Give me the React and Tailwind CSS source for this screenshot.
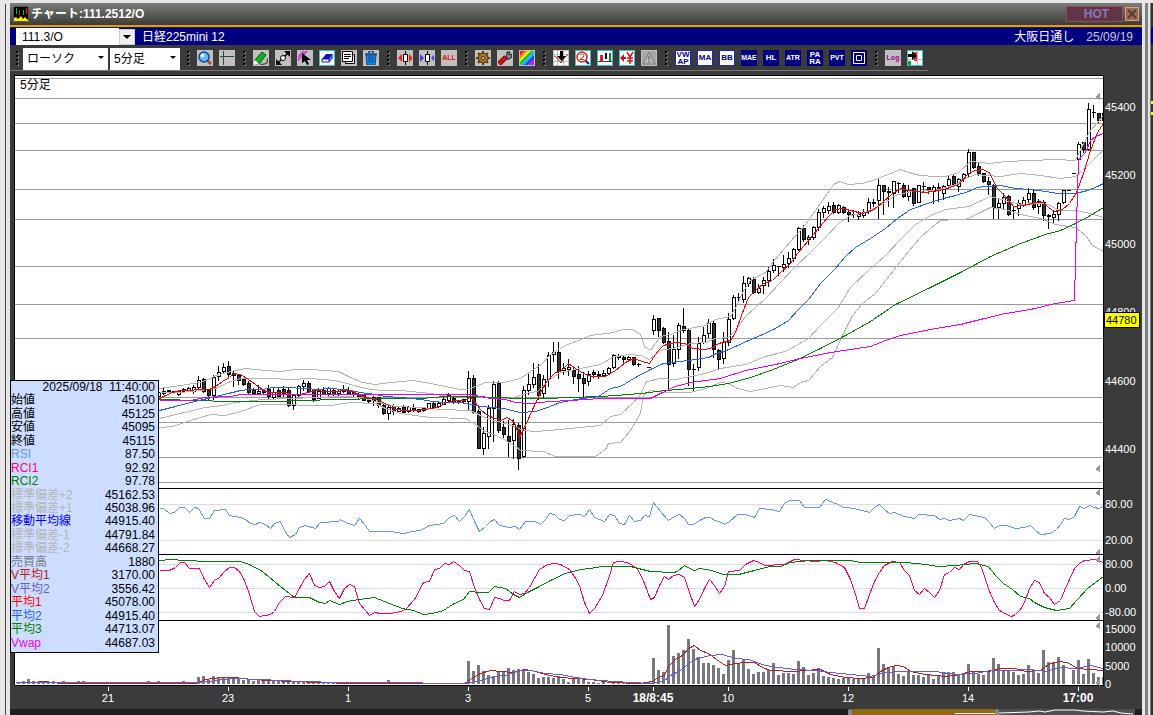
import React, { useState } from 'react';

const FIRST_X = 158;
const STEP = 5;

// high, body top, body bottom, low, filled
const candles = [
  [391, 392, 396, 396, 0], [388, 391, 393, 394, 0], [390, 390, 391, 391, 1], [391, 391, 392, 392, 1],
  [390, 391, 394, 395, 0], [388, 389, 391, 392, 0], [387, 388, 391, 391, 0], [385, 387, 391, 393, 0],
  [376, 380, 387, 388, 0], [378, 379, 391, 392, 1], [389, 390, 395, 399, 1], [375, 377, 395, 399, 0],
  [366, 372, 376, 380, 0], [363, 367, 371, 372, 0], [361, 366, 374, 376, 1], [371, 373, 375, 386, 1],
  [374, 375, 380, 384, 1], [378, 379, 384, 385, 1], [381, 383, 392, 394, 1], [388, 390, 393, 394, 1],
  [385, 391, 393, 393, 0], [389, 390, 392, 393, 1], [385, 389, 396, 398, 1], [387, 392, 397, 398, 0],
  [388, 390, 396, 396, 1], [386, 389, 393, 396, 1], [388, 390, 405, 406, 1], [394, 395, 405, 409, 0],
  [385, 386, 395, 396, 0], [380, 383, 386, 390, 0], [381, 383, 391, 392, 1], [390, 390, 399, 401, 1],
  [388, 391, 398, 398, 0], [387, 390, 394, 394, 1], [387, 388, 393, 396, 0], [389, 390, 394, 395, 1],
  [389, 391, 393, 396, 0], [385, 389, 391, 392, 0], [387, 390, 393, 393, 1], [391, 392, 394, 396, 1],
  [393, 394, 396, 398, 1], [395, 395, 400, 400, 1], [399, 400, 401, 402, 0], [396, 397, 400, 405, 0],
  [397, 397, 405, 407, 1], [404, 405, 413, 414, 1], [404, 407, 413, 419, 0], [404, 406, 411, 414, 1],
  [407, 408, 411, 411, 0], [405, 407, 412, 413, 1], [406, 407, 411, 412, 0], [404, 408, 410, 411, 1],
  [409, 409, 411, 412, 1], [407, 408, 410, 411, 0], [403, 403, 408, 408, 0], [401, 403, 407, 408, 1],
  [401, 403, 406, 407, 0], [396, 399, 404, 404, 0], [393, 395, 400, 402, 0], [396, 398, 402, 403, 1],
  [400, 401, 402, 403, 0], [399, 399, 401, 402, 1], [371, 378, 401, 409, 0], [375, 378, 412, 413, 1],
  [409, 411, 448, 448, 1], [427, 433, 448, 454, 0], [405, 408, 436, 448, 0], [381, 384, 408, 441, 0],
  [381, 383, 430, 432, 1], [421, 427, 434, 437, 1], [420, 436, 441, 456, 1], [419, 424, 440, 458, 0],
  [423, 425, 458, 469, 1], [386, 390, 456, 457, 0], [372, 384, 390, 394, 0], [363, 377, 384, 387, 0],
  [364, 374, 395, 399, 1], [375, 379, 393, 397, 0], [352, 355, 379, 386, 0], [342, 352, 354, 361, 0],
  [342, 352, 371, 378, 1], [363, 368, 370, 374, 0], [359, 367, 369, 375, 0], [368, 370, 376, 383, 1],
  [366, 374, 378, 391, 1], [372, 378, 383, 398, 1], [371, 374, 381, 385, 0], [370, 372, 374, 377, 1],
  [371, 374, 375, 378, 1], [370, 373, 375, 375, 0], [367, 368, 373, 374, 0], [354, 355, 367, 368, 0],
  [354, 356, 357, 359, 0], [356, 357, 359, 362, 1], [356, 357, 359, 361, 0], [357, 357, 364, 365, 1],
  [363, 364, 364, 366, 1], null, [367, 367, 367, 367, 1], [315, 319, 330, 334, 0],
  [318, 318, 330, 336, 1], [327, 328, 342, 343, 1], [332, 341, 364, 388, 1], [335, 349, 363, 366, 0],
  [323, 325, 349, 358, 0], [308, 326, 330, 332, 1], [329, 330, 369, 385, 1], [364, 369, 369, 390, 1],
  [337, 343, 367, 370, 0], [327, 335, 342, 343, 0], [319, 323, 333, 337, 0], [320, 323, 349, 357, 1],
  [349, 350, 359, 369, 1], [332, 342, 358, 363, 0], [313, 319, 342, 345, 0], [295, 297, 318, 319, 0],
  [293, 297, 297, 302, 1], [276, 283, 299, 302, 0], [277, 278, 283, 286, 0], [277, 279, 292, 293, 1],
  [284, 288, 292, 293, 0], [277, 280, 285, 293, 0], [267, 271, 280, 286, 0], [259, 265, 270, 272, 0],
  [266, 266, 266, 275, 1], [255, 264, 267, 271, 0], [252, 258, 263, 267, 0], [248, 249, 258, 261, 0],
  [227, 228, 249, 250, 0], [225, 228, 239, 241, 1], [235, 237, 239, 244, 0], [226, 227, 237, 239, 0],
  [209, 212, 227, 230, 0], [206, 208, 212, 217, 0], [202, 206, 210, 213, 0], [202, 205, 212, 213, 1],
  [204, 205, 212, 213, 0], [206, 207, 212, 213, 1], [211, 212, 214, 221, 1], [210, 214, 214, 217, 1],
  [211, 214, 216, 219, 0], [209, 212, 215, 217, 0], [198, 202, 211, 213, 0], [199, 202, 203, 206, 0],
  [178, 185, 200, 218, 0], [185, 185, 191, 214, 1], [187, 191, 192, 206, 1], [181, 181, 193, 207, 0],
  [182, 183, 183, 192, 1], [183, 185, 196, 197, 1], [185, 190, 196, 200, 0], [188, 188, 203, 205, 1],
  [185, 185, 202, 202, 0], [182, 186, 186, 191, 1], [187, 187, 189, 193, 1], [185, 187, 191, 203, 0],
  [183, 187, 190, 201, 1], [185, 186, 193, 199, 0], [176, 179, 185, 188, 0], [175, 176, 184, 186, 1],
  [178, 179, 186, 191, 0], [173, 174, 178, 181, 0], [149, 152, 173, 177, 0], [152, 152, 167, 168, 1],
  [163, 166, 173, 175, 1], [173, 173, 181, 182, 1], [177, 181, 184, 194, 1], [184, 185, 207, 218, 1],
  [199, 203, 207, 218, 0], [193, 197, 203, 208, 0], [195, 196, 214, 215, 1], [207, 210, 210, 218, 1],
  [200, 203, 208, 215, 0], [197, 200, 204, 206, 0], [188, 193, 199, 202, 0], [190, 193, 207, 209, 1],
  [199, 201, 206, 213, 0], [200, 202, 215, 220, 1], [214, 215, 216, 228, 1], [210, 214, 217, 222, 0],
  [202, 203, 214, 220, 0], [190, 190, 202, 203, 0], [190, 190, 190, 190, 1], [173, 173, 173, 173, 1],
  [142, 144, 159, 160, 0], [142, 142, 149, 152, 1], [103, 109, 149, 150, 0], [105, 112, 112, 117, 1],
  [113, 113, 120, 122, 1], [113, 113, 120, 122, 1],
];

const volumes = [
  2, 3, 5, 3, 2, 3, 2, 3, 2, 3, 2, 2, 3, 3, 2, 2, 1, 2, 1, 2, 2, 2, 1, 2, 2, 2, 3, 2,
  3, 2, 1, 2, 2, 3, 2, 1, 7, 8, 4, 8, 7, 6, 6, 7, 5, 4, 5, 3, 4, 3, 4, 4, 3, 4, 3, 3, 2, 3, 2, 2,
  1, 1, 1, 1, 1, 2, 1, 1, 1, 1, 1, 1, 1, 1, 4, 2, 1, 1, 1, 1, 1, 1, 1, 1, 1, 1, 1, 1, 1, 1,
  23, 13, 19, 13, 9, 8, 13, 13, 16, 14, 15, 15, 12, 10, 6, 7, 7, 6, 8, 5, 2, 6, 7, 6, 2, 2, 1, 2, 0, 1,
  1, 1, 1, 1, 1, 1, 2, 26, 14, 12, 59, 28, 31, 34, 45, 35, 27, 21, 21, 19, 16, 10, 24, 34, 20, 25, 15,
  10, 12, 12, 14, 21, 9, 11, 11, 10, 23, 17, 9, 11, 16, 8, 7, 6, 5, 6, 7, 5, 6, 5, 11, 7, 36, 20, 17,
  18, 10, 8, 13, 9, 9, 7, 9, 5, 9, 11, 12, 12, 9, 11, 20, 13, 10, 9, 13, 26, 20, 13, 13, 12, 9, 10, 19,
  14, 11, 34, 22, 22, 27, 19, 0, 14, 24, 10, 25, 11, 7, 7,
];

const priceGrid = [78, 98, 123, 150, 189, 219, 266, 304, 338, 397, 422, 457, 482];

const priceLines = [
  { color: '#b4b4b4', points: '159,388 180,385 200,382 205,380 218,374 235,370 245,368 265,370 280,371 295,369 310,369 325,370 338,371 350,377 362,382 375,384 390,382 412,380 425,382 445,386 460,389 466,389 475,386 485,382 503,382 520,378 533,369 541,364 550,354 565,345 578,340 590,335 613,332 622,329 632,329 640,334 644,346 650,350 655,343 660,336 670,334 683,329 705,325 715,319 730,316 736,306 742,292 750,280 765,272 773,261 790,241 805,224 820,203 833,184 839,181 848,184 862,183 875,179 885,175 900,169 908,172 920,175 935,176 945,176 958,172 970,161 990,163 1005,161 1030,160 1055,159 1075,160 1081,147 1090,130 1097,122 1103,115' },
  { color: '#b4b4b4', points: '159,392 180,392 200,390 215,388 230,381 240,378 270,378 290,379 310,378 335,380 350,384 365,388 380,390 400,390 430,393 450,396 475,396 510,398 525,393 537,391 548,380 560,372 580,368 600,364 612,357 628,354 640,355 649,359 660,350 672,348 690,343 705,342 715,338 728,337 735,330 745,316 755,307 765,298 780,282 795,266 810,252 825,237 838,223 850,215 862,213 880,205 895,195 910,191 935,190 955,184 965,178 975,174 1000,176 1020,173 1040,175 1060,178 1075,176 1082,170 1090,162 1097,155 1103,150' },
  { color: '#b4b4b4', points: '159,418 180,413 205,407 222,405 235,402 262,399 290,398 340,396 362,397 375,401 395,406 420,407 440,409 470,410 480,415 490,419 512,425 523,430 535,431 560,429 600,425 610,416 620,414 632,403 640,394 646,381 660,378 675,379 690,376 705,373 720,368 745,364 765,356 785,351 808,338 820,325 838,307 850,287 868,270 885,255 900,239 915,224 930,215 945,209 968,206 990,196 1005,200 1020,204 1045,203 1060,210 1075,210 1090,213 1103,217' },
  { color: '#b4b4b4', points: '159,427 172,426 190,420 210,414 225,415 240,411 260,404 285,404 310,405 330,405 350,402 375,403 385,408 400,413 430,417 465,418 475,424 483,430 500,437 515,446 520,450 543,451 555,456 595,456 605,449 608,443 620,442 630,430 640,413 643,395 650,390 665,392 690,392 705,388 720,382 728,383 737,388 750,391 765,388 780,385 793,387 800,382 808,380 820,366 832,357 842,335 852,315 862,303 875,293 893,270 908,251 920,237 930,228 940,220 955,219 965,219 980,212 990,207 1005,209 1020,214 1040,218 1055,224 1075,227 1085,235 1092,245 1103,251' },
  { color: '#008000', points: '159,399 200,400 225,401 265,401 280,401 300,400 340,399 380,398 420,398 445,396 468,396 500,397 515,398 545,398 570,397 600,396 615,395 640,393 665,390 690,388 710,386 728,383 750,377 770,370 795,360 820,348 845,335 870,321 895,304 930,287 960,272 990,256 1020,243 1045,234 1060,230 1075,223 1090,215 1103,207' },
  { color: '#1e60ff', points: '159,410 175,406 190,402 203,399 215,396 228,393 240,390 250,389 262,389 272,387 285,387 305,388 318,389 328,388 345,389 360,392 375,394 385,396 400,397 410,398 420,399 432,401 445,402 460,402 475,405 490,407 503,408 520,412 535,411 547,407 560,402 575,399 598,396 610,388 620,386 635,377 650,369 663,363 680,361 695,359 708,357 716,353 726,350 735,346 748,340 760,335 775,328 788,320 798,309 808,299 820,283 835,268 845,256 855,247 870,238 885,228 897,218 910,209 930,202 943,198 955,195 968,191 977,187 985,186 1000,185 1015,188 1030,189 1045,191 1058,193 1075,193 1087,190 1097,186 1103,183' },
  { color: '#ff0000', points: '159,398 165,395 172,392 180,390 190,390 198,389 209,389 215,386 222,381 229,377 233,373 240,374 248,379 255,384 262,389 268,392 275,392 285,392 292,394 300,394 307,392 315,390 325,391 335,391 345,390 352,391 362,396 375,399 385,403 395,409 405,410 415,410 425,409 437,407 446,402 455,400 465,400 470,396 480,409 487,415 495,418 500,420 507,417 514,422 519,437 525,425 533,407 540,392 547,380 555,372 560,371 568,363 575,368 585,374 592,376 605,376 615,370 625,362 633,358 642,361 649,363 657,351 663,345 675,342 685,343 692,348 705,349 712,347 718,343 730,340 735,332 741,315 748,297 755,290 763,283 772,280 780,272 790,263 797,253 808,240 818,228 828,216 835,209 842,208 850,210 862,213 872,210 882,202 892,193 900,188 907,190 915,191 925,192 943,189 958,184 968,173 975,170 982,169 989,172 996,187 1004,195 1013,206 1023,205 1035,202 1043,202 1048,207 1054,211 1062,209 1069,203 1076,192 1083,173 1090,150 1097,132 1103,123' },
  { color: '#ee00ee', points: '159,400 190,400 205,397 230,396 240,394 415,394 440,394 468,394 480,396 490,398 505,399 515,402 530,403 550,401 570,400 600,398 650,398 660,393 675,386 690,382 720,378 745,370 775,364 800,358 830,352 870,346 885,340 900,335 930,329 960,324 980,319 1005,313 1030,309 1055,303 1074,300 1075,260 1077,190 1078,160 1081,156 1085,152 1090,140 1095,136 1103,133' },
];

const rsiLines = [
  { color: '#6495ed', points: '159,508 163,508 169,513 174,512 179,507 184,507 189,512 194,507 198,508 204,518 209,518 214,510 225,509 229,515 240,517 245,519 250,523 255,524 259,522 265,524 270,528 274,523 280,521 284,530 289,537 295,534 299,527 305,525 315,528 320,522 338,521 340,519 345,522 354,525 359,518 365,525 369,531 390,531 403,533 412,531 420,530 429,525 443,523 449,517 454,515 459,521 464,516 469,509 474,521 479,531 485,526 490,521 494,519 499,525 509,527 515,526 519,529 525,521 535,521 540,524 545,519 549,513 554,514 559,519 564,520 569,515 579,514 584,516 589,509 594,517 604,521 609,514 614,515 619,523 624,524 629,515 634,521 640,520 644,515 649,516 653,502 660,511 668,520 674,516 679,514 684,518 688,524 693,524 699,520 705,517 710,517 714,520 719,521 724,524 729,521 737,514 745,514 754,517 759,508 770,509 779,511 784,503 789,500 799,500 804,507 819,507 825,499 830,501 835,503 844,507 854,508 869,512 874,507 879,504 884,509 889,513 894,512 904,516 914,518 918,514 934,515 939,519 944,518 949,520 959,518 963,520 969,514 984,517 989,522 994,528 999,525 1006,525 1015,528 1024,527 1030,525 1035,530 1040,534 1050,533 1056,529 1060,524 1064,518 1069,519 1074,516 1079,506 1084,508 1089,505 1094,507 1098,508 1103,506' },
];

const rciLines = [
  { color: '#ff0078', points: '159,570 169,570 175,567 180,562 184,562 189,568 199,568 204,579 209,587 214,580 219,577 224,571 229,567 234,567 239,571 244,580 249,594 254,611 259,616 265,615 270,614 274,611 279,602 285,596 294,597 300,586 304,579 309,573 314,585 319,587 324,586 329,581 334,591 339,598 344,588 349,584 354,586 359,603 365,610 369,615 374,612 380,613 390,613 400,611 405,609 414,599 423,582 429,581 434,569 439,568 444,563 449,564 453,561 459,565 464,570 469,571 474,587 479,599 484,608 489,609 494,597 499,598 504,600 509,600 514,591 519,594 524,593 529,587 539,569 547,564 555,563 560,564 569,569 574,576 579,585 584,602 589,613 594,608 602,595 609,575 613,562 619,561 627,562 637,568 644,583 650,599 654,597 659,585 664,576 668,579 673,575 679,574 684,577 689,592 694,606 699,599 704,588 709,579 714,585 719,593 724,586 728,571 739,570 745,564 749,562 753,560 759,562 764,565 784,564 794,559 804,560 815,561 825,560 835,562 844,567 850,579 855,594 859,608 864,608 869,594 874,581 879,572 884,565 892,561 899,562 904,570 909,575 914,590 919,594 924,588 929,592 934,597 939,590 944,574 949,572 954,567 959,569 963,564 969,561 977,561 981,567 984,576 989,591 994,602 999,610 1006,614 1011,616 1015,614 1020,609 1024,602 1029,588 1034,580 1039,582 1044,593 1049,597 1054,604 1060,600 1064,590 1069,579 1074,568 1079,563 1084,560 1095,559 1103,562' },
  { color: '#008000', points: '159,560 170,559 185,560 208,561 240,561 249,564 262,571 275,582 285,590 294,597 309,597 319,602 325,603 329,600 339,604 347,601 359,599 374,597 379,599 389,603 402,608 413,610 423,614 432,613 443,610 452,604 463,599 469,591 479,592 488,592 494,586 505,588 513,594 519,597 527,592 537,587 550,580 565,573 580,569 590,568 601,566 630,566 650,571 673,572 677,571 684,565 689,568 694,570 699,568 711,570 723,574 738,574 754,570 769,566 780,566 790,562 810,560 850,560 860,562 905,562 925,564 938,566 955,565 975,563 988,566 995,575 1003,583 1012,589 1020,596 1029,598 1034,602 1044,607 1056,610 1069,608 1077,599 1087,588 1103,576' },
];

const volumeLines = [
  { color: '#b22222', points: '30,682 45,681 60,683 100,683 195,683 205,679 220,677 235,677 250,679 290,681 350,683 464,683 470,679 480,673 490,670 500,671 513,672 525,669 535,671 545,674 560,677 575,678 590,679 610,682 640,683 652,681 658,677 664,675 668,666 675,659 682,655 688,648 694,645 700,650 708,653 716,659 725,665 735,663 745,662 754,662 762,667 770,670 795,671 803,670 820,669 830,674 845,677 860,678 872,677 880,671 888,667 895,665 903,666 910,671 925,674 945,676 960,674 970,671 988,671 1000,668 1015,668 1025,671 1040,670 1048,664 1058,661 1067,662 1077,668 1090,669 1103,670' },
  { color: '#6a5acd', points: '15,682 60,682 100,682 200,682 215,680 235,678 260,679 300,681 340,682 400,682 445,683 465,683 480,680 495,676 505,675 520,670 530,670 545,673 560,674 580,678 600,680 630,682 650,683 663,681 670,675 680,670 690,662 697,658 710,655 722,654 735,658 748,659 765,665 778,667 795,669 815,670 830,672 850,674 870,676 885,672 900,671 935,671 955,674 975,673 990,670 1010,670 1030,669 1045,671 1060,667 1075,668 1090,665 1103,668' },
];

const quoteRows = [
  ['始値', '45100', 'text-black'],
  ['高値', '45125', 'text-black'],
  ['安値', '45095', 'text-black'],
  ['終値', '45115', 'text-black'],
  ['RSI', '87.50', 'text-[#6495ed]'],
  ['RCI1', '92.92', 'text-[#ff0078]'],
  ['RCI2', '97.78', 'text-[#008000]'],
  ['標準偏差+2', '45162.53', 'text-[#b4b4b4]'],
  ['標準偏差+1', '45038.96', 'text-[#b4b4b4]'],
  ['移動平均線', '44915.40', 'text-[#0000ff]'],
  ['標準偏差-1', '44791.84', 'text-[#b4b4b4]'],
  ['標準偏差-2', '44668.27', 'text-[#b4b4b4]'],
  ['売買高', '1880', 'text-[#777780]'],
  ['V平均1', '3170.00', 'text-[#b22222]'],
  ['V平均2', '3556.42', 'text-[#6a5acd]'],
  ['平均1', '45078.00', 'text-[#ff0000]'],
  ['平均2', '44915.40', 'text-[#1e60ff]'],
  ['平均3', '44713.07', 'text-[#008000]'],
  ['Vwap', '44687.03', 'text-[#ee00ee]'],
];

const timeLabels = [
  [108, '21'], [228, '23'], [348, '1'], [468, '3'], [588, '5'], [653, '18/8:45', true],
  [728, '10'], [848, '12'], [968, '14'], [1078, '17:00', true],
];

const Lines = ({ lines }) => (
  <g transform="translate(0.5 0.5)" fill="none">
    {lines.map((line, i) => (
      <polyline key={i} points={line.points} stroke={line.color} />
    ))}
  </g>
);

const Marker = ({ y }) => <path d={`M1095 ${y + 1}l5 -4v7z`} fill="#999" />;

const Plot = ({ top, height, children }) => (
  <svg
    className="block h-full min-w-0 flex-1 bg-white"
    viewBox={`14 ${top} 1090 ${height}`}
    preserveAspectRatio="none"
    shapeRendering="crispEdges"
    aria-hidden="true"
  >
    {children}
    <path d={`M14.5 ${top + height}V${top + 0.5}H1103.5V${top + height}`} fill="none" stroke="#000" />
  </svg>
);

const Axis = ({ labels, className, children }) => (
  <div className={`relative flex w-[38px] shrink-0 flex-col justify-between pl-px text-[11px] leading-3 text-white ${className}`}>
    {labels.map((label) => (
      <span key={label}>{label}</span>
    ))}
    {children}
  </div>
);

const Grip = () => (
  <span className="flex w-[6px] flex-col items-center gap-[2px]">
    {[0, 1, 2, 3].map((i) => (
      <span key={i} className="h-[2px] w-[2px] bg-black shadow-[1px_1px_0_#777]" />
    ))}
  </span>
);

const Tool = ({ label, tone = 'gray', text, children }) => {
  const tones = {
    gray: 'bg-[#c0c0c0] border-[#c0c0c0]',
    cyan: 'bg-white border-[#30c8c8]',
    light: 'bg-white border-[#2020d0] text-[#000080]',
    navy: 'bg-[#000080] border-[#000080] text-white',
    log: 'bg-[#c0c0c0] border-[#c0c0c0] text-[#900090]',
    all: 'bg-[#c0c0c0] border-[#c0c0c0] text-[#e01010]',
  };
  const size = text && text.length === 3 ? 'text-[7px]' : 'text-[8px]';
  return (
    <button
      type="button"
      aria-label={label}
      className={`flex h-4 w-4 shrink-0 items-center justify-center border text-center font-bold leading-[7px] ${size} ${tones[tone]}`}
    >
      {text ? (
        <span className="w-4 shrink-0">{text}</span>
      ) : (
        <svg className="h-[14px] w-[14px] shrink-0" viewBox="1 1 14 14" fill="none">
          {children}
        </svg>
      )}
    </button>
  );
};

const Toolbar = () => {
  const [style, setStyle] = useState('ローソク');
  const [period, setPeriod] = useState('5分足');

  return (
    <div className="flex h-[26px] shrink-0">
      <div className="flex items-center gap-[6px] border-b border-[#777] pl-[4px] pr-[5px]">
        <Grip />
        <div className="-ml-[3px] -mr-px flex gap-[2px]">
          <div className="relative">
            <select
              aria-label="チャート種類"
              value={style}
              onChange={(e) => setStyle(e.target.value)}
              className="h-[22px] w-[85px] appearance-none bg-white pl-1 text-[12px] leading-4 text-black"
            >
              <option>ローソク</option>
            </select>
            <span className="pointer-events-none absolute right-[4px] top-[10px] border-x-[3px] border-t-[3px] border-x-transparent border-t-black" />
          </div>
          <div className="relative">
            <select
              aria-label="足種"
              value={period}
              onChange={(e) => setPeriod(e.target.value)}
              className="h-[22px] w-[70px] appearance-none bg-white pl-1 text-[12px] leading-4 text-black"
            >
              <option>5分足</option>
            </select>
            <span className="pointer-events-none absolute right-[4px] top-[10px] border-x-[3px] border-t-[3px] border-x-transparent border-t-black" />
          </div>
        </div>
        <Grip />
        <Tool label="拡大">
          <path d="M10 10l4 4" stroke="#b05020" strokeWidth="3" />
          <circle cx="7" cy="7" r="5" fill="#60b8ff" stroke="#1040b0" strokeWidth="1.5" />
          <circle cx="5.500" cy="5.500" r="2" fill="#e8f6ff" />
        </Tool>
        <Tool label="十字線">
          <path d="M4.500 0v16M0 6.500h16" stroke="#205030" />
        </Tool>
        <Grip />
        <Tool label="描画">
          <path d="M7 14.500c5 0 9-1 7-6" stroke="#555" strokeWidth="1.500" />
          <path d="M2 10L9 2l4 3-6 8-4 1z" fill="#10b020" stroke="#065a10" />
          <path d="M1 14l1-4 4 4z" fill="#fff" />
        </Tool>
        <Tool label="線編集">
          <path d="M2 14L14 2" stroke="#000" strokeWidth="1.500" />
          <path d="M9 1h6v6zM1 9v6h6z" fill="#000" />
          <circle cx="8" cy="8" r="2.500" fill="#fff" stroke="#000" />
        </Tool>
        <Tool label="選択">
          <path d="M1 7l7-7M0 11L11 0" stroke="#e020e0" strokeWidth="1.500" />
          <path d="M5 3v10l3-2 2 4 2-1-2-4h4z" fill="#000" />
        </Tool>
        <Tool label="消しゴム" tone="cyan">
          <path d="M3 9l4-5h7l-4 5z" fill="#1010c0" />
          <path d="M10 9l4-5v4l-4 5z" fill="#4060e0" />
          <path d="M3 9h7v3H3z" fill="#fff" stroke="#1010c0" />
        </Tool>
        <Tool label="一覧">
          <path d="M4.500 4.500h9v9h-9z" fill="#fff" stroke="#000" />
          <path d="M1.500 1.500h10v10h-10z" fill="#fff" stroke="#000" />
          <path d="M3 4.500h7M3 6.500h7M3 8.500h5" stroke="#000" />
        </Tool>
        <Tool label="全消去">
          <path d="M2 4h12M6 3V1h4v2" stroke="#104080" strokeWidth="1.500" />
          <path d="M3 5h10l-1 10H4z" fill="#1090f0" stroke="#104080" />
          <path d="M6 6v7M8 6v7M10 6v7" stroke="#104080" />
        </Tool>
        <Grip />
        <Tool label="間隔を広げる">
          <path d="M8.500 0v16" stroke="#000" />
          <path d="M6.500 4.500h4v7h-4z" fill="#fff" stroke="#000" />
          <path d="M5 4v8L1 8zM12 4v8l4-4z" fill="#f02020" />
        </Tool>
        <Tool label="間隔を狭める">
          <path d="M8.500 0v16" stroke="#000" />
          <path d="M6.500 4.500h4v7h-4z" fill="#fff" stroke="#000" />
          <path d="M1 4v8l4-4zM16 4v8l-4-4z" fill="#4040e0" />
        </Tool>
        <Tool label="全表示" tone="all" text="ALL" />
        <Grip />
        <Tool label="設定">
          <path d="M8 1v14M1 8h14M3 3l10 10M13 3L3 13" stroke="#604010" strokeWidth="2" />
          <circle cx="8" cy="8" r="5" fill="#a87020" stroke="#503008" />
          <path d="M8 6l2 2-2 2-2-2z" fill="#c0c0c0" stroke="#503008" />
        </Tool>
        <Tool label="ツール">
          <path d="M2 14l7-7" stroke="#700" strokeWidth="5" />
          <path d="M2 14l7-7" stroke="#e01010" strokeWidth="3" />
          <path d="M9 7l1-2V2l3 0-1 2 1 1 2-1v3l-3 2h-2z" fill="#888" stroke="#111" />
        </Tool>
        <Tool label="配色">
          <path d="M1 1h5L1 6z" fill="#f02020" />
          <path d="M6 1h3L1 9V6z" fill="#ff9000" />
          <path d="M9 1h3L1 12V9z" fill="#f0f000" />
          <path d="M12 1h3L1 15v-3z" fill="#10c010" />
          <path d="M15 1v4L5 15H1z" fill="#10c0f0" />
          <path d="M15 5v4l-6 6H5z" fill="#2040f0" />
          <path d="M15 9v6H9z" fill="#c020e0" />
        </Tool>
        <Grip />
        <Tool label="形状">
          <path d="M0 0h16v16H0z" fill="#fff" />
          <path d="M4.500 0v16M10.500 0v16M0 4.500h16M0 11.500h16" stroke="#bbb" />
          <path d="M0 5l4 3 4 5 4-6 4-3" stroke="#d01010" />
          <path d="M7 1h3v5h3l-4.500 5L4 6h3z" fill="#000" />
        </Tool>
        <Tool label="検索" tone="cyan">
          <path d="M10 10l4 4" stroke="#1020a0" strokeWidth="2" />
          <circle cx="7" cy="7" r="5" fill="#fff" stroke="#e02020" strokeWidth="1.500" />
          <path d="M5 5c1-2 4-1 4 1L5 9.500h4" stroke="#e02020" />
        </Tool>
        <Tool label="比較" tone="cyan">
          <path d="M0 11.500h16" stroke="#444" />
          <path d="M3 5h3v6H3z" fill="#e02020" />
          <path d="M8 3h2v6H8z" fill="#111" />
          <path d="M12 3h2v8h-2z" fill="#108030" />
        </Tool>
        <Tool label="価格" tone="cyan">
          <path d="M1 8l4-4v3h2v2H5v3z" fill="#d01010" />
          <path d="M8 2l3 5 3-5M11 7v7M8 8h6M8 11h6" stroke="#e01010" strokeWidth="1.500" />
        </Tool>
        <Tool label="アラート">
          <path d="M0 0h16v16H0z" fill="#a8a8a8" />
          <path d="M8 2l6 12H2z" fill="#b8b8b8" stroke="#777" />
          <path d="M8 6v4M8 11v2" stroke="#777" strokeWidth="1.500" />
        </Tool>
        <Grip />
        <Tool label="VWAP" tone="light" text="VW AP" />
        <Tool label="移動平均" tone="light" text="MA" />
        <Tool label="ボリンジャーバンド" tone="light" text="BB" />
        <Tool label="エンベロープ" tone="navy" text="MAE" />
        <Tool label="高値安値" tone="navy" text="HL" />
        <Tool label="ATR" tone="navy" text="ATR" />
        <Tool label="パラボリック" tone="navy" text="PA RA" />
        <Tool label="ピボット" tone="navy" text="PVT" />
        <Tool label="枠" tone="navy">
          <path d="M2.500 2.500h11v11h-11zM5.500 5.500h5v5h-5z" stroke="#fff" />
        </Tool>
        <Grip />
        <Tool label="対数" tone="log" text="Log" />
        <Tool label="右寄せ" tone="cyan">
          <path d="M0 9.500h16M10.500 0v16" stroke="#bbb" />
          <path d="M7 2h3v9H7z" fill="#f03030" />
          <path d="M1 4h4V1l5 5-5 4V7H1z" fill="#000" />
          <path d="M1 11h3v4H1z" fill="#10a030" />
        </Tool>
      </div>
    </div>
  );
};

const QuotePanel = () => (
  <div className="absolute left-0 top-[305px] h-[273px] w-[149px] border border-black bg-[#ccddff] pb-[2px]">
    <table className="h-full w-full text-[12px] leading-[13px] text-black">
      <thead>
        <tr>
          <th colSpan="2" className="p-0 pr-[3px] text-right font-normal">2025/09/18&nbsp; 11:40:00</th>
        </tr>
      </thead>
      <tbody>
        {quoteRows.map(([name, value, color]) => (
          <tr key={name}>
            <th scope="row" className={`whitespace-nowrap p-0 text-left font-normal ${color}`}>{name}</th>
            <td className="p-0 pr-[3px] text-right">{value}</td>
          </tr>
        ))}
      </tbody>
    </table>
  </div>
);

const TimeAxis = () => (
  <div className="flex h-[23px] shrink-0">
    <svg className="block h-full min-w-0 flex-1 overflow-visible" role="img" aria-label="時間軸">
      {timeLabels.map(([x, label, bold]) => {
        const left = `${((x - 14) / 1090) * 100}%`;
        return (
          <g key={label}>
            <rect x={left} y="1" width="1" height="4" fill="#fff" />
            <text
              x={left}
              y="16"
              textAnchor="middle"
              className={bold ? 'fill-white text-[12px] font-bold' : 'fill-white text-[11px]'}
            >
              {label}
            </text>
          </g>
        );
      })}
    </svg>
    <div className="w-[38px]" />
  </div>
);

const Chart = () => (
  <div className="relative flex min-h-0 flex-1 flex-col pl-[4px]">
    <div className="flex min-h-0 grow-[413] basis-0">
      <Plot top={75} height={413}>
        {priceGrid.map((y) => (
          <path key={y} d={`M15 ${y + 0.5}H1103`} stroke="#999" />
        ))}
        {candles.map((c, i) => {
          if (!c) return null;
          const x = FIRST_X + i * STEP;
          const [high, top, bottom, low, filled] = c;
          return (
            <g key={x}>
              <rect x={x} y={high} width="1" height={low - high + 1} fill="#000" />
              <rect x={x - 1} y={top} width="4" height={bottom - top + 1} fill="#000" />
              {bottom - top > 1 && (
                <rect x={x} y={top + 1} width="2" height={bottom - top - 1} fill={filled ? '#333' : '#fff'} />
              )}
            </g>
          );
        })}
        <Lines lines={priceLines} />
        <Marker y={96} />
        <Marker y={468} />
      </Plot>
      <Axis labels={['45400', '45200', '45000', '44800', '44600', '44400']} className="pb-[33px] pt-[26px]">
        <output className="absolute left-0 top-[237px] w-[36px] border border-black bg-[#ffff00] pl-px leading-[14px] text-black">
          44780
        </output>
      </Axis>
    </div>
    <div className="flex min-h-0 grow-[66] basis-0">
      <Plot top={488} height={66}>
        <path d="M15 504.500H1103M15 540.500H1103" stroke="#ddd" />
        <Lines lines={rsiLines} />
        <Marker y={492} />
        <Marker y={552} />
      </Plot>
      <Axis labels={['80.00', '20.00']} className="pb-[8px] pt-[10px]" />
    </div>
    <div className="flex min-h-0 grow-[66] basis-0">
      <Plot top={554} height={66}>
        <path d="M15 564.500H1103M15 588.500H1103M15 612.500H1103" stroke="#ddd" />
        <Lines lines={rciLines} />
        <Marker y={559} />
        <Marker y={617} />
      </Plot>
      <Axis labels={['80.00', '0.00', '-80.00']} className="pb-[2px] pt-[4px]" />
    </div>
    <div className="flex min-h-0 grow-[66] basis-0">
      <Plot top={620} height={66}>
        {volumes.map((v, i) => (
          <rect key={i} x={17 + i * STEP} y={684 - v} width="3" height={v} fill="#777780" />
        ))}
        <Lines lines={volumeLines} />
        <path d="M14 685.500H1104" stroke="#000" />
        <Marker y={625} />
        <Marker y={682} />
      </Plot>
      <Axis labels={['15000', '10000', '5000', '0']} className="-mb-1 pt-[3px]" />
    </div>
    <TimeAxis />
    <span className="absolute left-[10px] top-[3px] text-[12px] leading-[14px] text-black">5分足</span>
    <QuotePanel />
  </div>
);

const App = () => {
  const [code, setCode] = useState('111.3/O');

  return (
    <div className="flex h-screen w-full overflow-hidden bg-[#e6e6e6] font-['Liberation_Sans','Noto_Sans_CJK_JP',sans-serif]">
      <div className="flex w-[10px] shrink-0 justify-center pt-[4px]">
        <div className="w-px bg-[#444]" />
      </div>
      <div className="flex min-w-0 flex-1 flex-col border-t-[3px] border-[#e6e6e6] bg-[#3b3b3b]">
        <header className="flex h-[22px] shrink-0 items-center bg-linear-to-b from-[#7c7c7a] to-[#3c3c38] pl-[3px] pr-[3px]">
          <svg className="h-4 w-4" viewBox="0 0 16 16" aria-hidden="true">
            <path d="M0 0h16v16H0z" fill="#000" stroke="#aaa" />
            <path d="M3.500 2v6M10.500 4v5" stroke="#10c020" />
            <path d="M6.500 4v5M13.500 2v6" stroke="#f02020" />
            <path d="M1 15v-3l2-1 2 2 3-3 2 3 2-2 3 3v1z" fill="#ffee00" />
          </svg>
          <h1 className="ml-[2px] flex-1 text-[12px] font-bold leading-4 text-white">チャート:111.2512/O</h1>
          <button
            type="button"
            className="h-4 w-[57px] border border-[#8a5060] bg-[#623448] pl-1 text-[12px] font-bold leading-[14px] text-[#8878b8]"
          >
            HOT
          </button>
          <button type="button" aria-label="閉じる" className="ml-[2px] flex h-[14px] w-[14px] items-center justify-center border border-[#d8a080] bg-[#a86850]">
            <svg className="h-[10px] w-[10px]" viewBox="0 0 10 10">
              <path d="M1 1l8 8M9 1L1 9" stroke="#4a4040" strokeWidth="2" />
            </svg>
          </button>
        </header>
        <div className="h-[3px] shrink-0 border-t-2 border-[#e09a20] bg-[#222]" />
        <div className="flex h-[17px] shrink-0 items-center bg-[#000080] pl-[6px] pr-[9px] text-[12px] leading-4 text-white">
          <input
            aria-label="銘柄コード"
            value={code}
            onChange={(e) => setCode(e.target.value)}
            className="h-[17px] w-[103px] bg-white pl-[6px] leading-4 text-black"
          />
          <button type="button" aria-label="銘柄一覧" className="flex h-4 w-4 items-center justify-center border border-[#ccc] bg-[#eee]">
            <span className="border-x-[4px] border-t-[4px] border-x-transparent border-t-black" />
          </button>
          <span className="ml-[7px] flex-1">日経225mini 12</span>
          <span>大阪日通し</span>
          <time className="ml-[12px] text-[12px] text-[#c8c8c8]">25/09/19</time>
        </div>
        <Toolbar />
        <div className="h-[4px] shrink-0" />
        <Chart />
        <div className="flex h-[6px] shrink-0 bg-[#1e1e1e]">
          <div className="grow-[838] basis-0" />
          <div className="w-[4px] rounded-t-sm bg-[#888]" />
          <div className="grow-[143] basis-0 bg-[#8f6810]">
            <div className="ml-auto mt-[4px] h-px w-[40px] bg-[#eee]" />
          </div>
          <div className="w-[4px] rounded-t-sm bg-[#888]" />
          <div className="grow-[136] basis-0 bg-[#505050]">
            <svg className="block h-[6px] w-full" viewBox="0 0 136 6" preserveAspectRatio="none" aria-hidden="true">
              <path d="M0 4l30-1 10-1 6 1 10-2h20l8 1 20 1 10-1 8 2 12 1" fill="none" stroke="#fff" />
            </svg>
          </div>
          <div className="w-[7px]" />
        </div>
      </div>
      <div className="flex w-[11px] shrink-0 pt-[3px]">
        <div className="w-[3px] bg-[#e6e6e6]" />
        <div className="w-[3px] bg-[#808080]" />
        <div className="w-[2px] bg-[#e6e6e6]" />
        <div className="w-px bg-[#808080]" />
        <div className="flex flex-1 flex-col bg-[#333]">
          <div className="mt-[24px] h-[17px] bg-[#000080]" />
          <div className="mt-[57px] h-[14px] border-y-[3px] border-[#ffff00]" />
        </div>
      </div>
    </div>
  );
};

export default App;
